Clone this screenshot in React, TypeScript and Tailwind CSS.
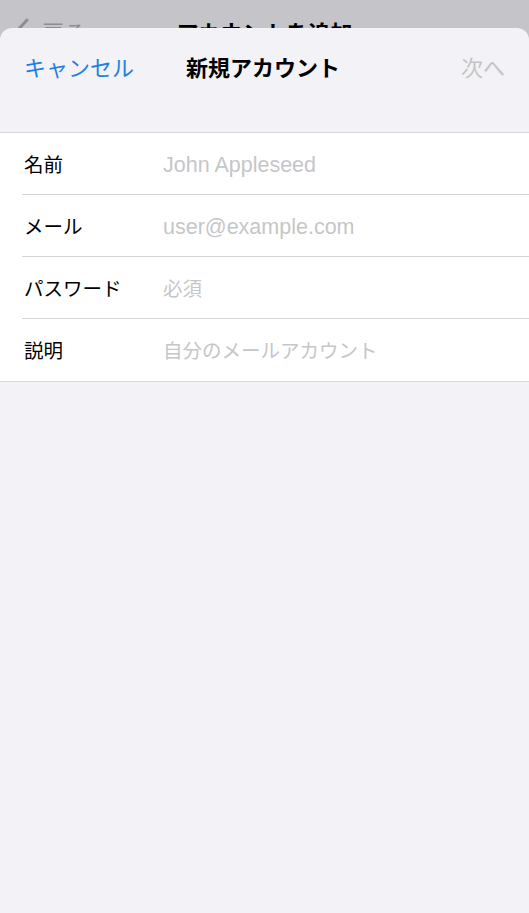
import React from "react";

const cjk = '"Noto Sans CJK JP", "Liberation Sans", sans-serif';
const latin = '"Liberation Sans", "Noto Sans CJK JP", sans-serif';

function Row({ label, placeholder, latinPh, last }: { label: string; placeholder: string; latinPh?: boolean; last?: boolean }) {
  return (
    <div className="pl-[22px] bg-white">
      <div className={`h-[62px] flex items-center ${last ? "" : "border-b border-[#d4d4d8]"}`}>
        <div className="w-[141px] pl-[2px] text-[19.5px] text-black" style={{ fontFamily: cjk }}>
          {label}
        </div>
        <div
          className={latinPh ? "text-[21.5px] text-[#c6c6c9] mt-[3px]" : "text-[19.5px] text-[#c6c6c9]"}
          style={{ fontFamily: latinPh ? latin : cjk }}
        >
          {placeholder}
        </div>
      </div>
    </div>
  );
}

export default function App() {
  return (
    <div className="w-[529px] h-[913px] bg-[#c5c5c9] flex flex-col overflow-hidden" style={{ fontFamily: cjk }}>
      <div className="h-[28px] overflow-hidden shrink-0">
        <div className="h-[62px] flex items-center relative">
          <div className="flex items-center pl-[14px] gap-[12px] text-[#8d8d92]">
            <svg width="16" height="26" viewBox="0 0 16 26" fill="none">
              <path d="M13 2 L3 13 L13 24" stroke="#8d8d92" strokeWidth="3" strokeLinecap="round" strokeLinejoin="round" />
            </svg>
            <span className="text-[22px]">戻る</span>
          </div>
          <div className="absolute left-0 right-0 text-center text-[22px] font-bold text-black">アカウントを追加</div>
        </div>
      </div>
      <div className="flex-1 bg-[#f2f2f7] rounded-t-[12px] flex flex-col">
        <div className="h-[76px] flex items-center justify-between px-[24px] relative">
          <span className="text-[22px] text-[#1f80e2]">キャンセル</span>
          <span className="absolute left-[186px] text-[22px] font-bold text-black">新規アカウント</span>
          <span className="text-[22px] text-[#c4c4c7]">次へ</span>
        </div>
        <div className="h-[28px]" />
        <div className="border-t border-b border-[#d8d8dc]">
          <Row label="名前" placeholder="John Appleseed" latinPh />
          <Row label="メール" placeholder="user@example.com" latinPh />
          <Row label="パスワード" placeholder="必須" />
          <Row label="説明" placeholder="自分のメールアカウント" last />
        </div>
      </div>
    </div>
  );
}
